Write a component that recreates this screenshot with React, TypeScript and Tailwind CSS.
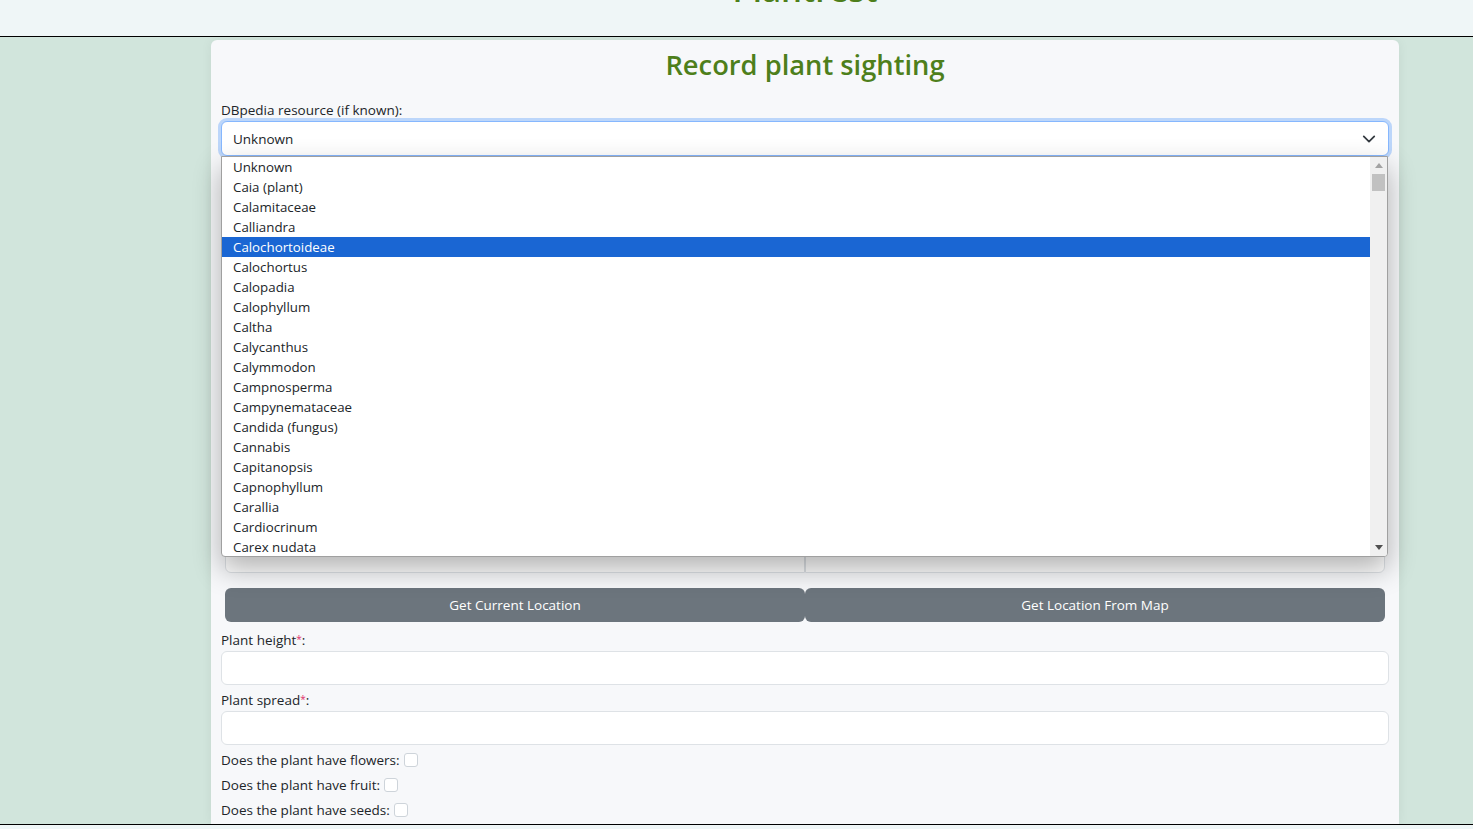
import React from "react";

const options = [
  "Unknown",
  "Caia (plant)",
  "Calamitaceae",
  "Calliandra",
  "Calochortoideae",
  "Calochortus",
  "Calopadia",
  "Calophyllum",
  "Caltha",
  "Calycanthus",
  "Calymmodon",
  "Campnosperma",
  "Campynemataceae",
  "Candida (fungus)",
  "Cannabis",
  "Capitanopsis",
  "Capnophyllum",
  "Carallia",
  "Cardiocrinum",
  "Carex nudata",
];

function Req() {
  return <sup className="text-[#e0306a] text-[10px] relative -top-[2px]">*</sup>;
}

export default function App() {
  return (
    <div
      className="w-[1473px] h-[829px] overflow-hidden bg-[#d1e5dc] text-[#212529] flex flex-col"
      style={{ fontFamily: '"Open Sans", "Noto Sans", sans-serif' }}
    >
      <header className="h-[37px] shrink-0 bg-[#eff6f7] border-b border-black flex items-end overflow-hidden">
        <div className="w-[1188px] ml-[211px] text-center text-[33px] font-semibold text-[#4e7f1b] leading-none translate-y-[-30px]">Plantrest</div>
      </header>
      <div className="flex-1 flex pt-[3px] overflow-hidden">
        <div className="ml-[211px] w-[1188px] bg-[#f7f8fa] rounded-t-[6px] px-[10px] shadow-[0_0_12px_rgba(0,0,0,0.06)] flex flex-col">
          <h2 className="text-center text-[27.3px] leading-none font-semibold text-[#4e7f1b] pt-[11px] pb-[23px]">Record plant sighting</h2>
          <label className="text-[13.5px] leading-[18px] mb-[2px]">DBpedia resource (if known):</label>
          <div className="relative">
            <div className="h-[35px] rounded-[6px] bg-white border border-[#86b7fe] shadow-[0_0_0_3px_rgba(13,110,253,0.25)] flex items-center justify-between pl-[11px] pr-[12px] text-[13.5px]">
              <span>Unknown</span>
              <svg width="14" height="14" viewBox="0 0 16 16" fill="none" stroke="#343a40" strokeWidth="2" strokeLinecap="round" strokeLinejoin="round">
                <path d="M2 5l6 6 6-6" />
              </svg>
            </div>
            <div className="absolute left-0 top-[35px] w-[1167px] h-[401px] bg-white border border-[#a0a0a0] rounded-b-[4px] shadow-[0_12px_28px_rgba(0,0,0,0.3)] z-10 flex overflow-hidden">
              <div className="flex-1 flex flex-col">
                {options.map((o) => (
                  <div
                    key={o}
                    className={
                      "h-[20px] leading-[20px] pl-[11px] text-[13.3px] " +
                      (o === "Calochortoideae" ? "bg-[#1a66d3] text-white" : "text-[#212529]")
                    }
                  >
                    {o}
                  </div>
                ))}
              </div>
              <div className="w-[17px] bg-[#f0f0f0] flex flex-col items-center">
                <div className="h-[17px] flex items-center justify-center">
                  <svg width="8" height="5" viewBox="0 0 8 5"><path d="M0 5L4 0L8 5Z" fill="#a3a3a3" /></svg>
                </div>
                <div className="w-[13px] h-[17px] bg-[#c1c1c1]" />
                <div className="flex-1" />
                <div className="h-[17px] flex items-center justify-center">
                  <svg width="8" height="5" viewBox="0 0 8 5"><path d="M0 0L8 0L4 5Z" fill="#505050" /></svg>
                </div>
              </div>
            </div>
          </div>
          <div className="px-[4px] flex flex-col pt-[383px]">
            <div className="flex">
              <div className="flex-1 h-[34px] bg-white border border-[#dee2e6] rounded-l-[6px]" />
              <div className="flex-1 h-[34px] bg-white border border-[#dee2e6] rounded-r-[6px]" />
            </div>
          </div>
          <div className="mt-[15px] px-[4px] flex">
            <button className="flex-1 h-[34px] bg-[#6c757d] text-white text-[13.5px] rounded-[6px]">Get Current Location</button>
            <button className="flex-1 h-[34px] bg-[#6c757d] text-white text-[13.5px] rounded-[6px]">Get Location From Map</button>
          </div>
          <label className="text-[13.5px] leading-[20px] mt-[8px]">
            Plant height<Req />:
          </label>
          <div className="h-[34px] mt-[1px] rounded-[6px] bg-white border border-[#dee2e6]" />
          <label className="text-[13.5px] leading-[20px] mt-[5px]">
            Plant spread<Req />:
          </label>
          <div className="h-[34px] mt-[1px] rounded-[6px] bg-white border border-[#dee2e6]" />
          {["Does the plant have flowers:", "Does the plant have fruit:", "Does the plant have seeds:"].map((t) => (
            <div key={t} className="flex items-center text-[13.5px] h-[20px] mt-[5px]">
              <span>{t}</span>
              <span className="ml-[4px] w-[14px] h-[14px] rounded-[3px] border border-[#ced4da] bg-white inline-block" />
            </div>
          ))}
        </div>
      </div>
      <div className="h-[5px] shrink-0 border-t border-black bg-[#eff6f7]" />
    </div>
  );
}
